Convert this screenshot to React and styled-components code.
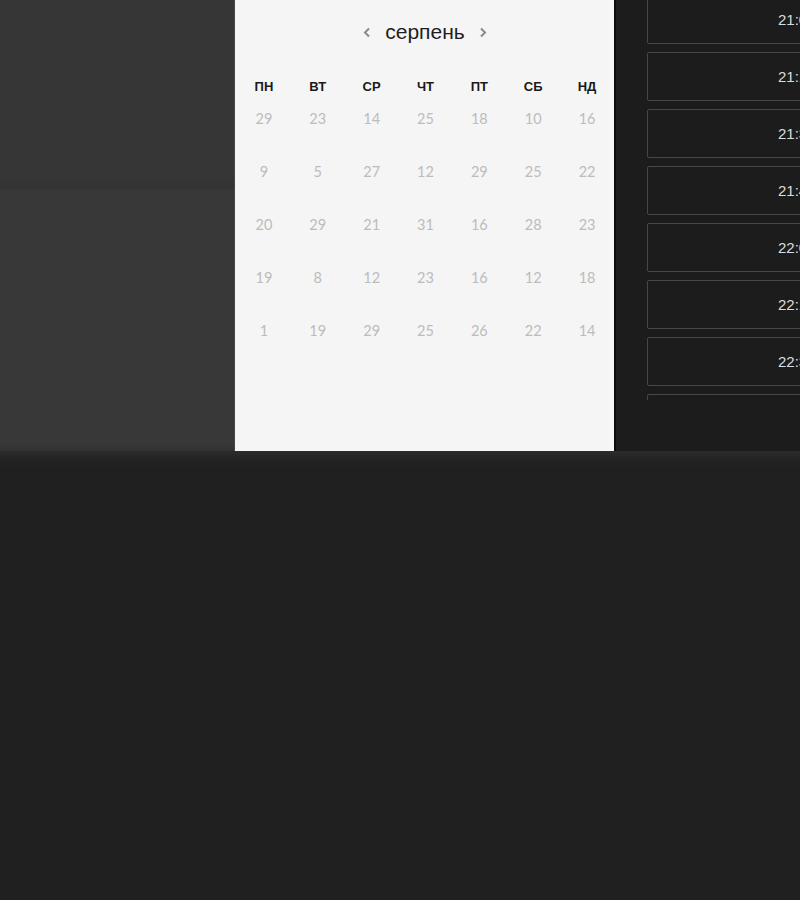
import React from "react";
import styled, { createGlobalStyle } from "styled-components";

const Global = createGlobalStyle`
  html, body { margin: 0; padding: 0; background: #202020; }
  body { font-family: "Liberation Sans", Arial, sans-serif; }
`;

const Page = styled.div`
  width: 800px;
  height: 900px;
  display: flex;
  flex-direction: column;
  background: #202020;
  overflow: hidden;
`;

const Screen = styled.div`
  display: flex;
  height: 451px;
  flex-shrink: 0;
`;

const Below = styled.div`
  flex: 1;
  background: linear-gradient(to bottom, #2b2b2b 0, #222 10px, #202020 18px);
`;

const Sidebar = styled.aside`
  width: 235px;
  display: flex;
  flex-direction: column;
  background: #383838;
  border-right: 1px solid #474747;
  box-sizing: border-box;
`;

const SidebarTop = styled.div`
  height: 181px;
  background: #363636;
  border-bottom: 8px solid #343434;
`;

const SidebarRest = styled.div`
  flex: 1;
  background: linear-gradient(to bottom, #383838 0, #383838 calc(100% - 8px), #323232 100%);
`;

const CalendarPanel = styled.section`
  width: 379px;
  background: #f5f5f5;
  display: flex;
  flex-direction: column;
`;

const MonthBar = styled.div`
  height: 64px;
  display: flex;
  align-items: center;
  justify-content: center;
  gap: 12px;
  padding-left: 1px;
`;

const MonthName = styled.span`
  font-family: "Liberation Sans", Arial, sans-serif;
  font-size: 21px;
  color: #1e1e1e;
`;

const NavButton = styled.button`
  border: 0;
  background: none;
  padding: 0 2px;
  display: flex;
  align-items: center;
  cursor: pointer;
`;

const Grid = styled.div`
  display: grid;
  grid-template-columns: repeat(7, 1fr);
  padding: 0 0 0 2px;
`;

const WeekRow = styled(Grid)`
  margin-top: 10px;
  height: 24px;
  align-items: center;
`;

const WeekDay = styled.span`
  text-align: center;
  font-family: "Liberation Sans", Arial, sans-serif;
  font-weight: 700;
  font-size: 13px;
  color: #1a1a1a;
`;

const Days = styled(Grid)`
  padding-top: 11px;
  row-gap: 33px;
`;

const Day = styled.span`
  height: 20px;
  line-height: 20px;
  text-align: center;
  font-family: Lato, "Open Sans", sans-serif;
  font-size: 14.5px;
  color: #bcbcbc;
`;

const TimePanel = styled.section`
  flex: 1;
  background: #1c1c1c;
  border-left: 2px solid #0c0c0c;
  overflow: hidden;
`;

const TimeList = styled.div`
  height: 400px;
  overflow: hidden;
  padding-left: 31px;
`;

const TimeTrack = styled.div`
  margin-top: -5px;
  display: flex;
  flex-direction: column;
  gap: 8px;
`;

const TimeSlot = styled.div`
  width: 190px;
  height: 49px;
  box-sizing: border-box;
  border: 1px solid #474747;
  border-radius: 2px;
  display: flex;
  align-items: center;
  padding-left: 130px;
  font-family: "Liberation Sans", Arial, sans-serif;
  font-size: 15px;
  color: #dcdcdc;
  flex-shrink: 0;
`;

const Chevron = ({ dir }) => (
  <svg width="8" height="11" viewBox="0 0 8 11" aria-hidden="true">
    <path
      d={dir === "left" ? "M6 1.5 L2 5.5 L6 9.5" : "M2 1.5 L6 5.5 L2 9.5"}
      fill="none"
      stroke="#8a8a8a"
      strokeWidth="2"
    />
  </svg>
);

const weekDays = ["ПН", "ВТ", "СР", "ЧТ", "ПТ", "СБ", "НД"];
const days = [
  29, 23, 14, 25, 18, 10, 16,
  9, 5, 27, 12, 29, 25, 22,
  20, 29, 21, 31, 16, 28, 23,
  19, 8, 12, 23, 16, 12, 18,
  1, 19, 29, 25, 26, 22, 14,
];
const times = ["21:00", "21:15", "21:30", "21:45", "22:00", "22:15", "22:30", "22:45"];

export default function App() {
  return (
    <Page>
      <Global />
      <Screen>
        <Sidebar>
          <SidebarTop />
          <SidebarRest />
        </Sidebar>
        <CalendarPanel>
          <MonthBar>
            <NavButton aria-label="Попередній місяць">
              <Chevron dir="left" />
            </NavButton>
            <MonthName>серпень</MonthName>
            <NavButton aria-label="Наступний місяць">
              <Chevron dir="right" />
            </NavButton>
          </MonthBar>
          <WeekRow>
            {weekDays.map((d) => (
              <WeekDay key={d}>{d}</WeekDay>
            ))}
          </WeekRow>
          <Days>
            {days.map((d, i) => (
              <Day key={i}>{d}</Day>
            ))}
          </Days>
        </CalendarPanel>
        <TimePanel>
          <TimeList>
            <TimeTrack>
              {times.map((t) => (
                <TimeSlot key={t}>{t}</TimeSlot>
              ))}
            </TimeTrack>
          </TimeList>
        </TimePanel>
      </Screen>
      <Below />
    </Page>
  );
}
